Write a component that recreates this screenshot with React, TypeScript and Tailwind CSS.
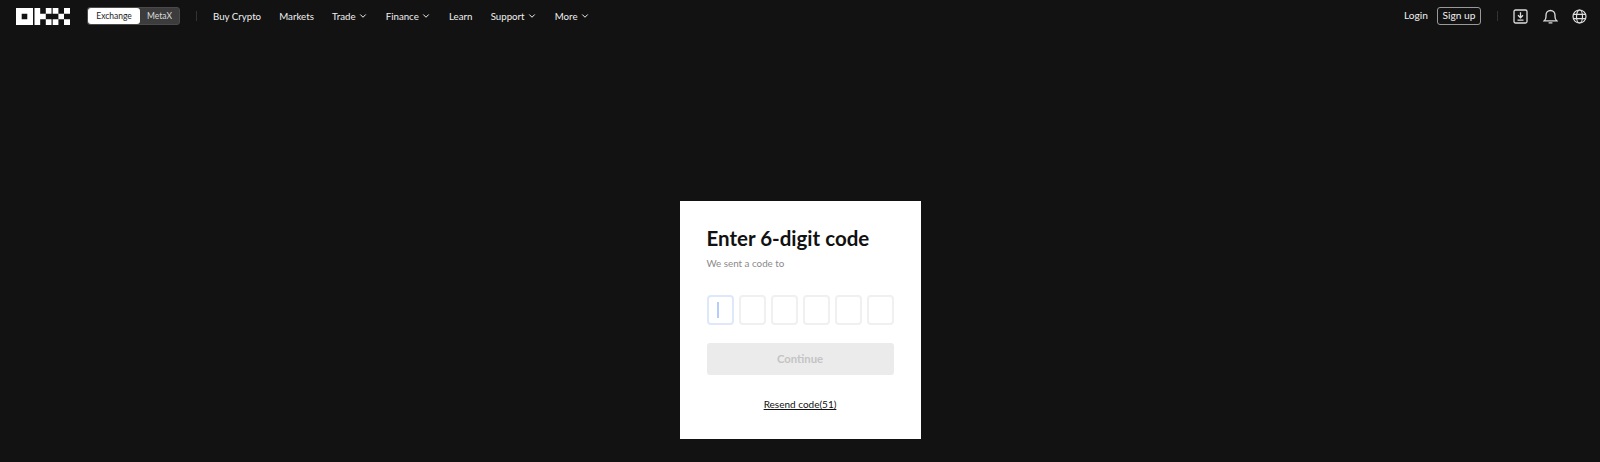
import { ChevronDown } from "lucide-react";

function Logo() {
  return (
    <svg width="54" height="17" viewBox="0 0 54 17" fill="#fff">
      <path fillRule="evenodd" d="M0 0h17v17H0zM5.7 5.7v5.6h5.6V5.7z" />
      <path d="M18.5 0h5.7v17h-5.7zM24.2 5.7h5.6v5.6h-5.6zM29.8 0h5.7v5.7h-5.7zM29.8 11.3h5.7V17h-5.7z" />
      <path d="M36.7 0h5.7v5.7h-5.7zM36.7 11.3h5.7V17h-5.7zM42.4 5.7H48v5.6h-5.6zM48 0h6v5.7h-6zM48 11.3h6V17h-6z" />
    </svg>
  );
}

function NavItem({ label, menu }: { label: string; menu?: boolean }) {
  return (
    <div className="flex items-center gap-[2px] text-[9.7px] text-[#f0f0f0]">
      <span>{label}</span>
      {menu && <ChevronDown size={10} strokeWidth={2.4} className="mt-px" />}
    </div>
  );
}

function DownloadIcon() {
  return (
    <svg width="15" height="15" viewBox="0 0 15 15" fill="none" stroke="#ddd" strokeWidth="1.3">
      <rect x="1" y="1" width="13" height="13" rx="1.5" />
      <path d="M7.5 3.2v5.3M5 6.3l2.5 2.5L10 6.3M4.5 11.2h6" />
    </svg>
  );
}

function BellIcon() {
  return (
    <svg width="15" height="15" viewBox="0 0 15 15" fill="none" stroke="#ddd" strokeWidth="1.3">
      <path d="M1.2 11.8h12.6c-1.3-1-1.8-2.2-1.8-4.1V6a4.5 4.5 0 0 0-9 0v1.7c0 1.9-.5 3.1-1.8 4.1zM5.6 13.9h3.8" />
    </svg>
  );
}

function GlobeIcon() {
  return (
    <svg width="15" height="15" viewBox="0 0 15 15" fill="none" stroke="#ddd" strokeWidth="1.2">
      <circle cx="7.5" cy="7.5" r="6.5" />
      <ellipse cx="7.5" cy="7.5" rx="3" ry="6.5" />
      <path d="M1 5.3h13M1 9.7h13" />
    </svg>
  );
}

export default function App() {
  return (
    <div className="flex h-[462px] w-[1600px] flex-col bg-[#121212] font-['Lato',sans-serif]">
      <header className="flex h-[32px] items-center pl-[16px] pr-[13px]">
        <Logo />
        <div className="ml-[17px] flex h-[18px] w-[93px] rounded-[3px] border border-[#4a4a4a] bg-[#3c3c3c] text-[8.5px]">
          <div className="flex w-[52px] items-center justify-center rounded-[3px] bg-white text-[#222]">Exchange</div>
          <div className="flex flex-1 items-center justify-center text-[#ddd]">MetaX</div>
        </div>
        <div className="ml-[16px] h-[10px] w-px bg-[#333]" />
        <nav className="ml-[16px] flex items-center gap-[18.2px]">
          <NavItem label="Buy Crypto" />
          <NavItem label="Markets" />
          <NavItem label="Trade" menu />
          <NavItem label="Finance" menu />
          <NavItem label="Learn" />
          <NavItem label="Support" menu />
          <NavItem label="More" menu />
        </nav>
        <div className="ml-auto flex items-center">
          <span className="text-[10.2px] text-[#f0f0f0]">Login</span>
          <div className="ml-[9px] flex h-[18px] w-[44px] items-center justify-center rounded-[3px] border border-[#999] text-[10.2px] text-[#f0f0f0]">
            Sign up
          </div>
          <div className="ml-[16px] h-[10px] w-px bg-[#333]" />
          <div className="ml-[15px] flex items-center gap-[14.5px]">
            <DownloadIcon />
            <BellIcon />
            <GlobeIcon />
          </div>
        </div>
      </header>
      <main className="flex flex-1 justify-center pt-[169px]">
        <div className="flex h-[238px] w-[241px] flex-col bg-white px-[27px] pt-[25px]">
          <h1 className="text-[20.5px] leading-[24px] font-bold text-[#111]">Enter 6-digit code</h1>
          <p className="mt-[6px] text-[9.8px] leading-[14px] text-[#8a8a8a]">We sent a code to</p>
          <div className="mt-[25px] flex justify-between">
            <div className="flex h-[30px] w-[27px] items-center justify-center rounded-[4px] border-2 border-[#dfe8fb]">
              <div className="ml-[-4px] h-[16px] w-[2px] bg-[#b6ccfb]" />
            </div>
            {[0, 1, 2, 3, 4].map((i) => (
              <div key={i} className="h-[30px] w-[27px] rounded-[4px] border-2 border-[#f0f0f0]" />
            ))}
          </div>
          <button className="mt-[18px] flex h-[32px] items-center justify-center rounded-[3px] bg-[#ebebeb] text-[11.3px] font-bold text-[#c4c4c4]">
            Continue
          </button>
          <a className="mt-[22px] self-center text-[10px] leading-[14px] text-[#111] underline">Resend code(51)</a>
        </div>
      </main>
    </div>
  );
}
